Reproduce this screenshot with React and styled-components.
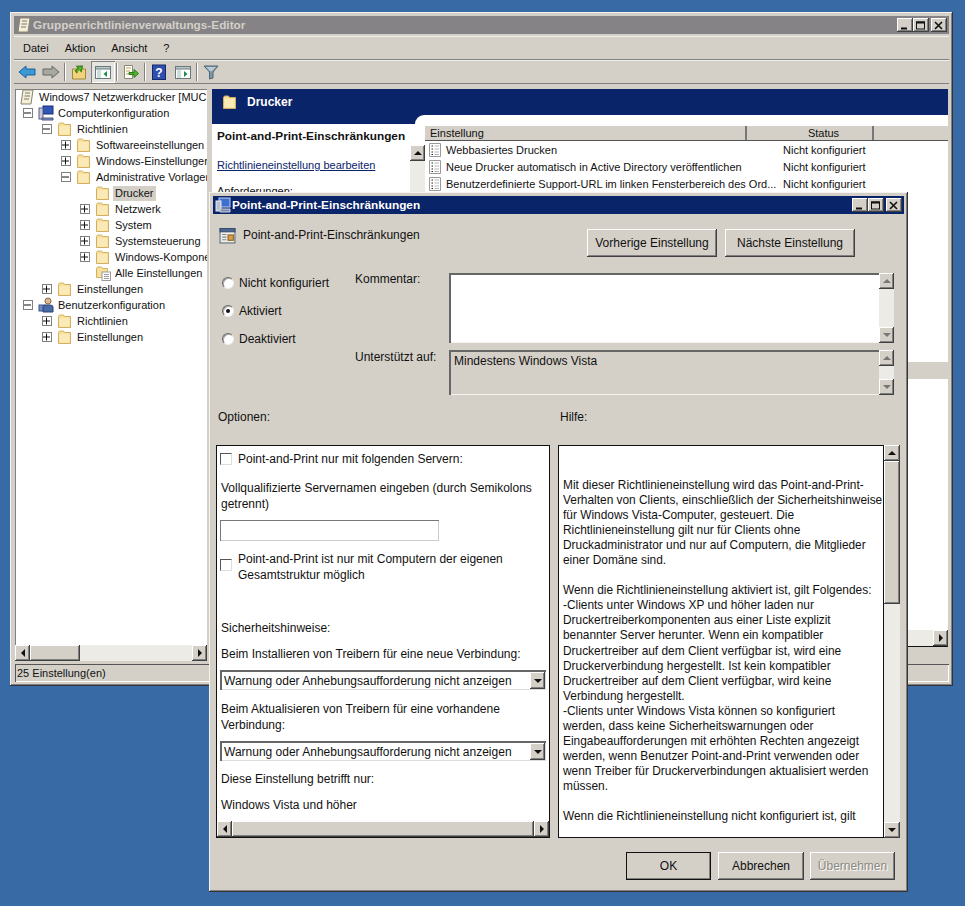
import React from "react";
import styled, { createGlobalStyle } from "styled-components";

const Global = createGlobalStyle`
  html, body { margin: 0; padding: 0; background: #386ba5; }
  * { box-sizing: border-box; }
  body { font-family: "Liberation Sans", Arial, sans-serif; font-size: 12px; color: #111; }
`;

const raised = `box-shadow: inset -1px -1px #404040, inset 1px 1px #fff, inset -2px -2px #808080, inset 2px 2px #d4d0c8;`;
const sunken = `box-shadow: inset 1px 1px #555, inset -1px -1px #fff;`;

const Desktop = styled.div`
  position: relative; width: 965px; height: 906px; overflow: hidden; background: #386ba5;
`;
const Win = styled.div`
  position: absolute; left: ${p => p.$x}px; top: ${p => p.$y}px; width: ${p => p.$w}px; height: ${p => p.$h}px;
  background: #d4d0c8; padding: 4px; display: flex; flex-direction: column;
  box-shadow: inset -1px -1px #333, inset 1px 1px #f4f3f0, inset -2px -2px #808080;
`;
const TitleBar = styled.div`
  height: 18px; flex: none; display: flex; align-items: center; gap: 1px; padding: 0 2px;
  background: ${p => p.$active ? "#0a246a" : "#858386"};
  color: ${p => p.$active ? "#fff" : "#d4d0c8"};
  font-weight: bold; font-size: 11.8px; white-space: nowrap;
`;
const TitleText = styled.span`flex: 1;`;
const WinBtns = styled.div`display: flex; align-items: center;`;
const WinBtn = styled.div`
  width: 16px; height: 14px; background: #d4d0c8; ${raised}
  display: flex; align-items: center; justify-content: center; margin-left: ${p => p.$gap || 0}px;
`;
const MenuBar = styled.div`
  height: 24px; margin-top: 2px; flex: none; display: flex; align-items: center; padding-left: 5px; gap: 8px;
  border-bottom: 1px solid #808080; border-top: 1px solid #f0efec;
`;
const MenuItem = styled.span`padding: 0 4px; font-size: 11px;`;
const ToolBar = styled.div`
  height: 24px; flex: none; display: flex; align-items: center; padding-left: 1px;
  border-bottom: 1px solid #808080; border-top: 1px solid #f0efec;
`;
const ToolBtn = styled.div`
  width: 24px; height: 22px; display: flex; align-items: center; justify-content: center;
  ${p => p.$on ? "box-shadow: inset 1px 1px #808080, inset -1px -1px #fff; background:#e6e4df;" : ""}
`;
const ToolSep = styled.div`width: 2px; height: 18px; margin: 0 1px; border-left: 1px solid #808080; border-right: 1px solid #fff;`;

const Work = styled.div`
  flex: 1; min-height: 0; display: flex; gap: 5px; margin-top: 3px; padding: 2px 1px 0;
`;
const TreePanel = styled.div`
  width: 192px; height: 572px; flex: none; background: #fff; display: flex; flex-direction: column;
  box-shadow: inset 1px 1px #808080; font-size: 11px;
`;
const TreeBody = styled.div`flex: 1; overflow: hidden;`;
const TreeRow = styled.div`
  height: 16px; display: flex; align-items: center; white-space: nowrap; overflow: hidden;
  padding-left: ${p => 8 + 19 * p.$level}px;
`;
const RootRow = styled(TreeRow)`padding-left: 4px; gap: 4px;`;
const Expander = styled.div`
  width: 10px; height: 10px; flex: none; margin-right: 5px; border: 1px solid #808080; background: #fff;
  display: flex; align-items: center; justify-content: center; visibility: ${p => p.$none ? "hidden" : "visible"};
`;
const TreeLabel = styled.span`
  margin-left: 2px; padding: 1px 2px; line-height: 13px;
  background: ${p => p.$sel ? "#d4d0c8" : "transparent"};
`;

const RightPane = styled.div`width: 736px; height: 572px; flex: none; display: flex; flex-direction: column;`;
const Banner = styled.div`
  height: 26px; flex: none; background: #0a246a; color: #fff; font-weight: bold; font-size: 12px;
  display: flex; align-items: center; padding: 0 0 0 10px; gap: 9px;
`;
const Body = styled.div`height: 532px; flex: none; display: flex; background: #0a246a; border-bottom: 1px solid #111;`;
const DescCol = styled.div`
  position: relative; width: 213px; margin-top: 9px; background: #fff; flex: none; display: flex;
  &::after {
    content: ""; position: absolute; right: 0; top: -9px; width: 10px; height: 10px; background: #fff; border-top-left-radius: 9px;
  }
`;
const DescText = styled.div`flex: 1; padding: 5px 0 0 5px; overflow: hidden;`;
const DescTitle = styled.div`font-weight: bold; font-size: 11.8px; line-height: 15px; white-space: nowrap;`;
const DescLink = styled.a`display: block; margin-top: 14px; color: #0a246a; text-decoration: underline; line-height: 15px; font-size: 11px;`;
const DescReq = styled.div`margin-top: 11px; line-height: 15px; font-size: 11px;`;
const DescScroll = styled.div`width: 15px; padding-top: 21px; flex: none; display: flex; flex-direction: column; height: 100%;`;
const ListCol = styled.div`flex: 1; min-width: 0; background: #fff; padding-top: 11px; display: flex; flex-direction: column; font-size: 11px;`;
const ListHead = styled.div`
  height: 15px; flex: none; display: flex; background: #d4d0c8; border-bottom: 1px solid #555; line-height: 14px;
`;
const HeadCell = styled.div`
  width: ${p => p.$w}px; flex: ${p => p.$w ? "none" : "1"}; padding-left: ${p => p.$center ? 28 : 5}px; text-align: ${p => p.$center ? "center" : "left"};
  border-right: ${p => p.$w ? "2px solid #777" : "0"};
`;
const ListRows = styled.div`flex: 1; overflow: hidden;`;
const ListRow = styled.div`
  height: 17px; display: flex; align-items: center; white-space: nowrap;
  background: ${p => p.$sel ? "#d4d0c8" : "transparent"};
`;
const RowName = styled.div`width: 357px; flex: none; display: flex; align-items: center; gap: 4px; padding-left: 3px; overflow: hidden;`;
const RowStatus = styled.div`padding-left: 1px;`;
const Tabs = styled.div`flex: 1;`;
const StatusBar = styled.div`height: 18px; flex: none; display: flex; gap: 2px; margin-top: 4px; margin-left: 1px; font-size: 11px;`;
const StatusCell = styled.div`
  flex: ${p => p.$w ? "none" : "1"}; width: ${p => p.$w ? p.$w + "px" : "auto"}; padding-left: 2px; line-height: 18px;
  ${sunken}
`;

const ScrollV = styled.div`width: ${p => p.$w || 15}px; flex: ${p => p.$fill ? "1" : "none"}; min-height: 0; display: flex; flex-direction: column; background: #ecebe6;`;
const ScrollH = styled.div`height: ${p => p.$h || 16}px; flex: none; display: flex; background: #ecebe6;`;
const ScrollBtn = styled.div`
  width: ${p => p.$w || 15}px; height: ${p => p.$h || 16}px; flex: none; background: #d4d0c8; ${raised}
  display: flex; align-items: center; justify-content: center;
`;
const Thumb = styled.div`
  background: #d4d0c8; ${raised} flex: none;
  ${p => p.$len ? (p.$v ? `height:${p.$len}px;` : `width:${p.$len}px;`) : "flex:1;"}
`;
const Track = styled.div`flex: 1;`;
const Tri = styled.div`
  width: 0; height: 0; border-style: solid;
  ${p => ({
    up: `border-width: 0 4px 4px 4px; border-color: transparent transparent ${p.$c} transparent;`,
    down: `border-width: 4px 4px 0 4px; border-color: ${p.$c} transparent transparent transparent;`,
    left: `border-width: 4px 4px 4px 0; border-color: transparent ${p.$c} transparent transparent;`,
    right: `border-width: 4px 0 4px 4px; border-color: transparent transparent transparent ${p.$c};`,
  }[p.$d])}
`;

const DialogHead = styled.div`
  display: flex; align-items: flex-start; height: 28px; margin-top: 15px; padding-left: 6px; flex: none;
`;
const DialogIconSlot = styled.div`margin-top: -2px;`;
const DialogName = styled.div`margin-left: 7px; flex: 1; line-height: 14px; margin-top: -1px;`;
const Btn = styled.div`
  width: ${p => p.$w}px; height: 28px; flex: none; background: #d4d0c8; ${raised}
  display: flex; align-items: center; justify-content: center; margin-right: ${p => p.$mr || 0}px;
  ${p => p.$def ? "outline: 1px solid #111; outline-offset: -1px;" : ""}
  color: ${p => p.$off ? "#8a8880" : "#111"};
  ${p => p.$off ? "text-shadow: 1px 1px #fff;" : ""}
`;
const Settings = styled.div`
  height: 124px; margin-top: 15px; flex: none; display: grid; grid-template-columns: 142px 94px 445px;
`;
const RadioCol = styled.div`display: flex; flex-direction: column; padding: 3px 0 0 9px; gap: 12px;`;
const RadioRow = styled.div`height: 16px; display: flex; align-items: center; gap: 5px;`;
const Radio = styled.div`
  width: 12px; height: 12px; flex: none; border-radius: 50%; background: #fff; display: flex; align-items: center; justify-content: center;
  border: 1px solid; border-color: #666 #eee #eee #666; box-shadow: inset 1px 1px 0 #aaa;
`;
const RadioDot = styled.div`width: 4px; height: 4px; border-radius: 50%; background: #111;`;
const FieldLabels = styled.div`display: flex; flex-direction: column;`;
const FieldLabel = styled.div`height: ${p => p.$h}px; line-height: 15px; white-space: nowrap;`;
const Fields = styled.div`display: flex; flex-direction: column; gap: 7px; padding-top: 1px;`;
const Field = styled.div`
  height: ${p => p.$h}px; display: flex; background: ${p => p.$off ? "#d4d0c8" : "#fff"};
  box-shadow: inset 2px 2px #666, inset -1px -1px #f4f3f0;
`;
const FieldText = styled.div`flex: 1; padding: 4px 0 0 5px;`;
const PaneLabels = styled.div`height: 49px; flex: none; display: flex; padding-top: 14px; line-height: 15px;`;
const PaneLabel = styled.div`width: ${p => p.$w}px; padding-left: ${p => p.$pl}px;`;
const Panes = styled.div`height: 393px; flex: none; display: flex; padding-left: 3px;`;
const OptionsPane = styled.div`
  width: 334px; height: 393px; flex: none; background: #fff; border: 1px solid #111; display: flex; flex-direction: column;
`;
const OptionsBody = styled.div`flex: 1; min-height: 0; padding: 5px 0 0 4px; overflow: hidden;`;
const OptText = styled.div`line-height: 16px; margin-top: ${p => p.$mt || 0}px; white-space: nowrap;`;
const OptCheck = styled.div`display: flex; align-items: flex-start; gap: 6px; margin-top: ${p => p.$mt || 0}px; margin-left: -1px; line-height: 16px;`;
const Check = styled.div`width: 12px; height: 12px; flex: none; margin-top: ${p => p.$top || 2}px; background: #fff; border: 1px solid; border-color: #555 #ddd #ddd #555;`;
const TextInput = styled.div`
  width: 219px; height: 21px; margin: 8px 0 0 -1px; background: #fff; box-shadow: inset 1px 1px #777, inset -1px -1px #ccc, inset 0 0 0 1px #bbb;
`;
const Select = styled.div`
  width: 326px; height: 20px; margin: 8px 0 0 -1px; display: flex; align-items: center; justify-content: space-between;
  box-shadow: inset 2px 2px #666, inset -1px -1px #ddd; padding: 2px 1px 1px 4px;
`;
const SelectBtn = styled(ScrollBtn)`width: 15px; height: 17px;`;
const HelpPane = styled.div`
  width: 326px; margin-left: 8px; height: 393px; flex: none; background: #fff; border: 1px solid #111;
  padding: 32px 0 0 4px; overflow: hidden; line-height: 15.05px; white-space: pre; font-size: 11.9px;
`;
const Actions = styled.div`display: flex; justify-content: flex-end; margin-top: 14px; padding-right: 9px; gap: 6px; flex: none;`;

const Ico = ({ s = 16, children, vb = "0 0 16 16" }) => (
  <svg width={s} height={s} viewBox={vb} style={{ flex: "none", display: "block" }}>{children}</svg>
);
const Folder = () => (
  <Ico>
    <path d="M1.5 3.5 L2.5 2 H6.5 L7.5 3.5 H13.5 V14.5 H1.5 Z" fill="#f7e09a" stroke="#d2b063" />
    <path d="M2.5 5 H12.5 V13.5 H2.5 Z" fill="#fbeab5" />
  </Ico>
);
const Plus = () => (
  <svg width="8" height="8" viewBox="0 0 8 8"><path d="M0 4 H7 M3.5 0.5 V7.5" stroke="#111" fill="none" /></svg>
);
const Minus = () => (
  <svg width="8" height="8" viewBox="0 0 8 8"><path d="M0 4 H7" stroke="#111" fill="none" /></svg>
);
const SettingIcon = () => (
  <Ico s={14} vb="0 0 14 14">
    <path d="M1.5 .5 H12.5 V13.5 H1.5 Z" fill="#fff" stroke="#9a9a9a" />
    <path d="M3.5 3 H5 M3.5 6 H5 M3.5 9 H5 M3.5 11.5 H5" stroke="#222" />
    <path d="M6.5 3 H11 M6.5 6 H11 M6.5 9 H11 M6.5 11.5 H11" stroke="#b5b5b5" />
  </Ico>
);
const ScrollIcon = () => (
  <Ico>
    <path d="M4 1 H14 L12 15 H2 Z" fill="#f5efd8" stroke="#8a8472" />
    <path d="M6 4 H11 M5.5 7 H11 M5 10 H10" stroke="#777" />
  </Ico>
);
const ComputerIcon = () => (
  <Ico>
    <rect x="5" y="1" width="10" height="8" fill="#2f57b8" stroke="#1d2f70" />
    <rect x="1" y="3" width="4" height="11" fill="#c4c8d8" stroke="#5a6080" />
    <path d="M4 13 H15 V15 H4 Z" fill="#8a97c4" stroke="#47527f" />
  </Ico>
);
const UserIcon = () => (
  <Ico>
    <rect x="1" y="8" width="6" height="6" fill="#6c8cc8" stroke="#3c5488" />
    <circle cx="10" cy="4" r="3" fill="#e0b890" stroke="#8a6a48" />
    <path d="M5 15 V10 Q5 8 8 8 H12 Q15 8 15 10 V15 Z" fill="#4a6aa8" stroke="#2d4272" />
  </Ico>
);
const AllSettings = () => (
  <Ico>
    <path d="M1.5 3.5 L2.5 2 H6.5 L7.5 3.5 H12.5 V12.5 H1.5 Z" fill="#f7e09a" stroke="#d2b063" />
    <rect x="7" y="7" width="8.5" height="8.5" fill="#fff" stroke="#9a9a9a" />
    <path d="M9 9.5 H14 M9 11.5 H14 M9 13.5 H14" stroke="#999" />
  </Ico>
);
const Arrow = ({ color, line, flip }) => (
  <svg width="18" height="16" viewBox="0 0 18 16" style={{ transform: flip ? "scaleX(-1)" : "none" }}>
    <path d="M1 8 L8 2 V5 H17 V11 H8 V14 Z" fill={color} stroke={line} />
  </svg>
);
const UpFolder = () => (
  <Ico>
    <path d="M1.5 5 H14.5 V15 H1.5 Z" fill="#f2d27c" stroke="#a08a3a" />
    <path d="M4 7 V4 H8 V1.5 L12.5 5 L8 8.5 V6" fill="#5ab52f" stroke="#2f7a14" transform="rotate(-40 8 5)" />
  </Ico>
);
const TreePaneIcon = ({ dir }) => (
  <Ico>
    <rect x="0.5" y="2.5" width="15" height="12" fill="#fff" stroke="#6a7a7a" />
    <rect x="0.5" y="2.5" width="15" height="2.5" fill="#b9c8cc" stroke="#6a7a7a" />
    <path d="M2 7 H6 M2 9 H6 M2 11 H6 M2 13 H6" stroke="#9bb" />
    <path d={dir === "l" ? "M12 7 V13 L8.5 10 Z" : "M9 7 V13 L12.5 10 Z"} fill="#1f8a4a" />
  </Ico>
);
const ExportIcon = () => (
  <Ico>
    <path d="M1.5 1.5 H9.5 V14.5 H1.5 Z" fill="#fff" stroke="#8a8a78" />
    <path d="M3 4 H8 M3 7 H7 M3 10 H7" stroke="#c2a040" />
    <path d="M6 8.5 H11 V5.5 L15.5 9.5 L11 13.5 V10.5 H6 Z" fill="#53b52f" stroke="#2f7a14" />
  </Ico>
);
const HelpIcon = () => (
  <Ico>
    <rect x="1.5" y="1" width="13" height="14.5" fill="#2e4fae" stroke="#16286c" />
    <text x="8" y="13" fontSize="12" fontWeight="bold" fill="#fff" textAnchor="middle" fontFamily="Liberation Sans">?</text>
  </Ico>
);
const FunnelIcon = () => (
  <Ico>
    <path d="M1 2 H15 L10 8 V14 L6.5 15 V8 Z" fill="#7f99a8" stroke="#4f6472" />
    <path d="M3 3 H13 L9 7 H7 Z" fill="#b9cbd4" />
  </Ico>
);
const PolicyIcon = () => (
  <Ico s={17}>
    <rect x="1" y="1.5" width="14" height="13.5" fill="#f2efe4" stroke="#5a6a7a" />
    <rect x="1" y="1.5" width="14" height="3" fill="#4a6a9a" stroke="#3a4a6a" />
    <path d="M3 7 H7 M3 9.5 H7 M3 12 H7" stroke="#7a8a9a" />
    <rect x="8.5" y="7.5" width="5" height="5" fill="#d9a04a" stroke="#8a6020" />
  </Ico>
);
const DlgIcon = () => (
  <Ico>
    <rect x="4" y="1" width="11" height="9" fill="#3b6fd0" stroke="#c8d0e8" />
    <rect x="1" y="4" width="5" height="10" fill="#b8c0d0" stroke="#e8ecf4" />
    <path d="M5 12 H15 V15 H5 Z" fill="#7a8ab0" stroke="#d0d4e0" />
  </Ico>
);

const CapsBtns = () => (
  <WinBtns>
    <WinBtn><svg width="10" height="9"><path d="M1 7.5 H7" stroke="#111" strokeWidth="2" /></svg></WinBtn>
    <WinBtn><svg width="10" height="9"><rect x="0.5" y="1" width="8" height="7" fill="none" stroke="#111" /><path d="M0 1.5 H9" stroke="#111" strokeWidth="2" /></svg></WinBtn>
    <WinBtn $gap={2}><svg width="10" height="9"><path d="M1 1 L8 8 M8 1 L1 8" stroke="#111" strokeWidth="1.6" /></svg></WinBtn>
  </WinBtns>
);

const VBar = ({ thumb, fill, color = "#111", w }) => (
  <ScrollV $fill={fill} $w={w}>
    <ScrollBtn $w={w}><Tri $d="up" $c={color} /></ScrollBtn>
    {thumb ? <Thumb $v $len={thumb} /> : null}
    <Track />
    <ScrollBtn $w={w}><Tri $d="down" $c={color} /></ScrollBtn>
  </ScrollV>
);
const HBar = ({ thumb, fullThumb }) => (
  <ScrollH>
    <ScrollBtn><Tri $d="left" $c="#111" /></ScrollBtn>
    {fullThumb ? <Thumb /> : <Thumb $len={thumb} />}
    {fullThumb ? null : <Track />}
    <ScrollBtn><Tri $d="right" $c="#111" /></ScrollBtn>
  </ScrollH>
);

const tree = [
  { l: 0, e: "-", i: <ComputerIcon />, t: "Computerkonfiguration" },
  { l: 1, e: "-", i: <Folder />, t: "Richtlinien" },
  { l: 2, e: "+", i: <Folder />, t: "Softwareeinstellungen" },
  { l: 2, e: "+", i: <Folder />, t: "Windows-Einstellungen" },
  { l: 2, e: "-", i: <Folder />, t: "Administrative Vorlagen" },
  { l: 3, i: <Folder />, t: "Drucker", sel: true },
  { l: 3, e: "+", i: <Folder />, t: "Netzwerk" },
  { l: 3, e: "+", i: <Folder />, t: "System" },
  { l: 3, e: "+", i: <Folder />, t: "Systemsteuerung" },
  { l: 3, e: "+", i: <Folder />, t: "Windows-Komponenten" },
  { l: 3, i: <AllSettings />, t: "Alle Einstellungen" },
  { l: 1, e: "+", i: <Folder />, t: "Einstellungen" },
  { l: 0, e: "-", i: <UserIcon />, t: "Benutzerkonfiguration" },
  { l: 1, e: "+", i: <Folder />, t: "Richtlinien" },
  { l: 1, e: "+", i: <Folder />, t: "Einstellungen" },
];

const rows = [
  "Webbasiertes Drucken",
  "Neue Drucker automatisch in Active Directory veröffentlichen",
  "Benutzerdefinierte Support-URL im linken Fensterbereich des Ord...",
];

const helpText = `Mit dieser Richtlinieneinstellung wird das Point-and-Print-
Verhalten von Clients, einschließlich der Sicherheitshinweise
für Windows Vista-Computer, gesteuert. Die
Richtlinieneinstellung gilt nur für Clients ohne
Druckadministrator und nur auf Computern, die Mitglieder
einer Domäne sind.

Wenn die Richtlinieneinstellung aktiviert ist, gilt Folgendes:
-Clients unter Windows XP und höher laden nur
Druckertreiberkomponenten aus einer Liste explizit
benannter Server herunter. Wenn ein kompatibler
Druckertreiber auf dem Client verfügbar ist, wird eine
Druckerverbindung hergestellt. Ist kein kompatibler
Druckertreiber auf dem Client verfügbar, wird keine
Verbindung hergestellt.
-Clients unter Windows Vista können so konfiguriert
werden, dass keine Sicherheitswarnungen oder
Eingabeaufforderungen mit erhöhten Rechten angezeigt
werden, wenn Benutzer Point-and-Print verwenden oder
wenn Treiber für Druckerverbindungen aktualisiert werden
müssen.

Wenn die Richtlinieneinstellung nicht konfiguriert ist, gilt`;

export default function App() {
  return (
    <Desktop>
      <Global />
      <Win $x={10} $y={12} $w={943} $h={674}>
        <TitleBar>
          <ScrollIcon />
          <TitleText>Gruppenrichtlinienverwaltungs-Editor</TitleText>
          <CapsBtns />
        </TitleBar>
        <MenuBar>
          <MenuItem>Datei</MenuItem>
          <MenuItem>Aktion</MenuItem>
          <MenuItem>Ansicht</MenuItem>
          <MenuItem>?</MenuItem>
        </MenuBar>
        <ToolBar>
          <ToolBtn><Arrow color="#3a9ad8" line="#1c5f9a" /></ToolBtn>
          <ToolBtn><Arrow color="#a8a8a0" line="#666" flip /></ToolBtn>
          <ToolSep />
          <ToolBtn><UpFolder /></ToolBtn>
          <ToolBtn $on><TreePaneIcon dir="l" /></ToolBtn>
          <ToolSep />
          <ToolBtn><ExportIcon /></ToolBtn>
          <ToolSep />
          <ToolBtn><HelpIcon /></ToolBtn>
          <ToolBtn><TreePaneIcon dir="r" /></ToolBtn>
          <ToolSep />
          <ToolBtn><FunnelIcon /></ToolBtn>
        </ToolBar>
        <Work>
          <TreePanel>
            <TreeBody>
              <RootRow><ScrollIcon /><span>Windows7 Netzwerkdrucker [MUCDC]</span></RootRow>
              {tree.map((n, i) => (
                <TreeRow key={i} $level={n.l}>
                  <Expander $none={!n.e}>{n.e === "+" ? <Plus /> : n.e === "-" ? <Minus /> : null}</Expander>
                  {n.i}
                  <TreeLabel $sel={n.sel}>{n.t}</TreeLabel>
                </TreeRow>
              ))}
            </TreeBody>
            <HBar thumb={50} />
          </TreePanel>
          <RightPane>
            <Banner><Folder /><span>Drucker</span></Banner>
            <Body>
              <DescCol>
                <DescText>
                  <DescTitle>Point-and-Print-Einschränkungen</DescTitle>
                  <DescLink>Richtlinieneinstellung bearbeiten</DescLink>
                  <DescReq>Anforderungen:</DescReq>
                </DescText>
                <DescScroll><VBar fill /></DescScroll>
              </DescCol>
              <ListCol>
                <ListHead>
                  <HeadCell $w={322}>Einstellung</HeadCell>
                  <HeadCell $w={127} $center>Status</HeadCell>
                  <HeadCell />
                </ListHead>
                <ListRows>
                  {rows.map(r => (
                    <ListRow key={r}>
                      <RowName><SettingIcon /><span>{r}</span></RowName>
                      <RowStatus>Nicht konfiguriert</RowStatus>
                    </ListRow>
                  ))}
                  {Array.from({ length: 10 }, (_, i) => <ListRow key={i} />)}
                  <ListRow $sel />
                </ListRows>
                <HBar thumb={300} />
              </ListCol>
            </Body>
            <Tabs />
          </RightPane>
        </Work>
        <StatusBar>
          <StatusCell $w={560}>25 Einstellung(en)</StatusCell>
          <StatusCell />
        </StatusBar>
      </Win>

      <Win $x={209} $y={192} $w={699} $h={700}>
        <TitleBar $active>
          <DlgIcon />
          <TitleText>Point-and-Print-Einschränkungen</TitleText>
          <CapsBtns />
        </TitleBar>
        <DialogHead>
          <DialogIconSlot><PolicyIcon /></DialogIconSlot>
          <DialogName>Point-and-Print-Einschränkungen</DialogName>
          <Btn $w={130} $mr={8}>Vorherige Einstellung</Btn>
          <Btn $w={130} $mr={49}>Nächste Einstellung</Btn>
        </DialogHead>
        <Settings>
          <RadioCol>
            <RadioRow><Radio /><span>Nicht konfiguriert</span></RadioRow>
            <RadioRow><Radio><RadioDot /></Radio><span>Aktiviert</span></RadioRow>
            <RadioRow><Radio /><span>Deaktiviert</span></RadioRow>
          </RadioCol>
          <FieldLabels>
            <FieldLabel $h={78}>Kommentar:</FieldLabel>
            <FieldLabel $h={30}>Unterstützt auf:</FieldLabel>
          </FieldLabels>
          <Fields>
            <Field $h={70}><FieldText /><VBar color="#777" /></Field>
            <Field $h={45} $off>
              <FieldText>Mindestens Windows Vista</FieldText>
              <VBar color="#777" />
            </Field>
          </Fields>
        </Settings>
        <PaneLabels>
          <PaneLabel $w={345} $pl={5}>Optionen:</PaneLabel>
          <PaneLabel $w={200} $pl={2}>Hilfe:</PaneLabel>
        </PaneLabels>
        <Panes>
          <OptionsPane>
            <OptionsBody>
              <OptCheck><Check /><span>Point-and-Print nur mit folgenden Servern:</span></OptCheck>
              <OptText $mt={13}>Vollqualifizierte Servernamen eingeben (durch Semikolons<br />getrennt)</OptText>
              <TextInput />
              <OptCheck $mt={10}><Check $top={8} /><span>Point-and-Print ist nur mit Computern der eigenen<br />Gesamtstruktur möglich</span></OptCheck>
              <OptText $mt={37}>Sicherheitshinweise:</OptText>
              <OptText $mt={10}>Beim Installieren von Treibern für eine neue Verbindung:</OptText>
              <Select><span>Warnung oder Anhebungsaufforderung nicht anzeigen</span><SelectBtn><Tri $d="down" $c="#111" /></SelectBtn></Select>
              <OptText $mt={11}>Beim Aktualisieren von Treibern für eine vorhandene<br />Verbindung:</OptText>
              <Select><span>Warnung oder Anhebungsaufforderung nicht anzeigen</span><SelectBtn><Tri $d="down" $c="#111" /></SelectBtn></Select>
              <OptText $mt={10}>Diese Einstellung betrifft nur:</OptText>
              <OptText $mt={10}>Windows Vista und höher</OptText>
            </OptionsBody>
            <HBar fullThumb />
          </OptionsPane>
          <HelpPane>{helpText}</HelpPane>
          <VBar thumb={143} w={16} />
        </Panes>
        <Actions>
          <Btn $w={85} $def $mr={1}>OK</Btn>
          <Btn $w={86}>Abbrechen</Btn>
          <Btn $w={85} $off>Übernehmen</Btn>
        </Actions>
      </Win>
    </Desktop>
  );
}
